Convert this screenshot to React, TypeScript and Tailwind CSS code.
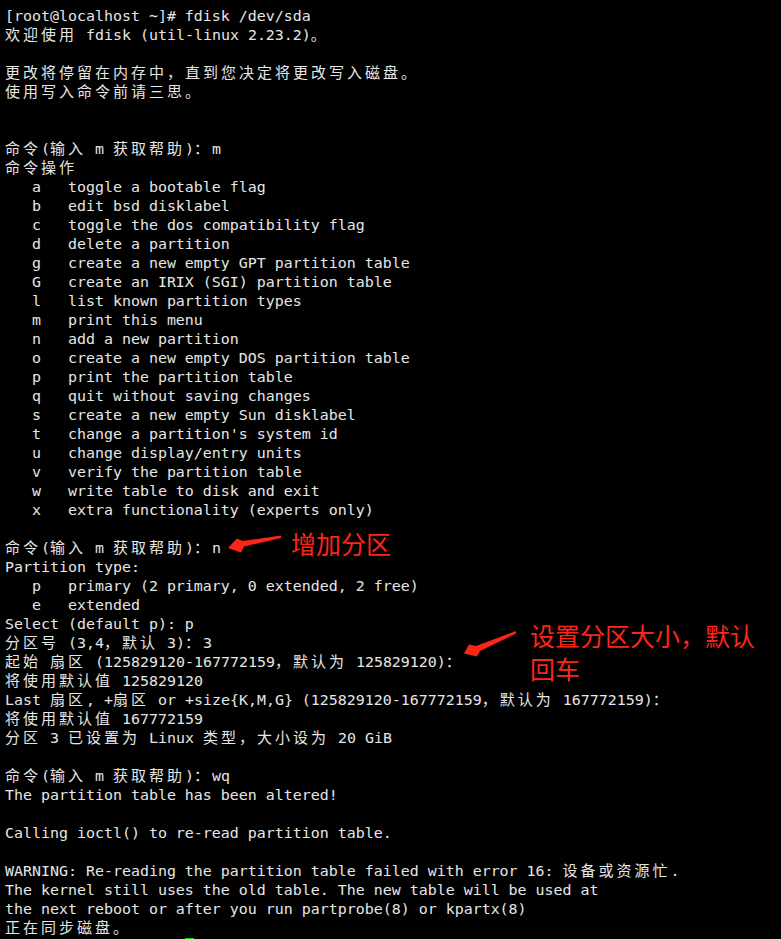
import React from "react";

const lines: string[] = [
  "[root@localhost ~]# fdisk /dev/sda",
  "欢迎使用 fdisk (util-linux 2.23.2)。",
  "",
  "更改将停留在内存中，直到您决定将更改写入磁盘。",
  "使用写入命令前请三思。",
  "",
  "",
  "命令(输入 m 获取帮助)：m",
  "命令操作",
  "   a   toggle a bootable flag",
  "   b   edit bsd disklabel",
  "   c   toggle the dos compatibility flag",
  "   d   delete a partition",
  "   g   create a new empty GPT partition table",
  "   G   create an IRIX (SGI) partition table",
  "   l   list known partition types",
  "   m   print this menu",
  "   n   add a new partition",
  "   o   create a new empty DOS partition table",
  "   p   print the partition table",
  "   q   quit without saving changes",
  "   s   create a new empty Sun disklabel",
  "   t   change a partition's system id",
  "   u   change display/entry units",
  "   v   verify the partition table",
  "   w   write table to disk and exit",
  "   x   extra functionality (experts only)",
  "",
  "命令(输入 m 获取帮助)：n",
  "Partition type:",
  "   p   primary (2 primary, 0 extended, 2 free)",
  "   e   extended",
  "Select (default p): p",
  "分区号 (3,4，默认 3)：3",
  "起始 扇区 (125829120-167772159，默认为 125829120)：",
  "将使用默认值 125829120",
  "Last 扇区, +扇区 or +size{K,M,G} (125829120-167772159，默认为 167772159)：",
  "将使用默认值 167772159",
  "分区 3 已设置为 Linux 类型，大小设为 20 GiB",
  "",
  "命令(输入 m 获取帮助)：wq",
  "The partition table has been altered!",
  "",
  "Calling ioctl() to re-read partition table.",
  "",
  "WARNING: Re-reading the partition table failed with error 16: 设备或资源忙.",
  "The kernel still uses the old table. The new table will be used at",
  "the next reboot or after you run partprobe(8) or kpartx(8)",
  "正在同步磁盘。",
];

const WIDE = /[\u2E80-\u9FFF\uF900-\uFAFF\uFF00-\uFF60\uFFE0-\uFFE6\u3000-\u303F]/;

function renderLine(s: string) {
  const parts: { wide: boolean; text: string }[] = [];
  for (const ch of s) {
    const w = WIDE.test(ch);
    const last = parts[parts.length - 1];
    if (last && last.wide === w) last.text += ch;
    else parts.push({ wide: w, text: ch });
  }
  return parts.map((p, i) =>
    p.wide ? (
      <span
        key={i}
        className="font-['Noto_Sans_CJK_SC','DejaVu_Sans_Mono',sans-serif] text-[15px] leading-[8px] tracking-[3px]"
      >
        {p.text}
      </span>
    ) : (
      <span key={i}>{p.text}</span>
    )
  );
}

export default function App() {
  return (
    <div className="relative h-[939px] w-[781px] overflow-hidden bg-black text-[#e6e6e6] font-['DejaVu_Sans_Mono','Noto_Sans_CJK_SC',monospace] text-[14.95px]">
      <div className="pl-[5px] pt-[7px]">
        {lines.map((l, i) => (
          <div key={i} className="h-[19px] whitespace-pre leading-[19px]">
            {renderLine(l)}
          </div>
        ))}
        <div className="h-[19px] whitespace-pre leading-[19px]">
          <span>{"                    "}</span>
          <span className="inline-block h-[19px] w-[9px] bg-[#00e000] align-top" />
        </div>
      </div>

      <svg
        className="pointer-events-none absolute left-0 top-0"
        width="781"
        height="939"
        viewBox="0 0 781 939"
      >
        <polygon
          points="228,548 237,538.5 243,541 281,535.5 281,538 244,546.5 241,552.5"
          fill="#ff2418"
        />
        <polygon
          points="464,653.5 469,644.5 476,646 516,631 516,633.5 480,651 477,656.5"
          fill="#ff2418"
        />
      </svg>

      <div className="absolute left-[291px] top-[527px] whitespace-pre font-['Noto_Sans_CJK_SC',sans-serif] text-[25px] leading-[33px] text-[#ff2418]">
        增加分区
      </div>
      <div className="absolute left-[530px] top-[619px] font-['Noto_Sans_CJK_SC',sans-serif] text-[25px] leading-[33px] text-[#ff2418]">
        <div className="whitespace-pre">设置分区大小，默认</div>
        <div className="whitespace-pre">回车</div>
      </div>
    </div>
  );
}
